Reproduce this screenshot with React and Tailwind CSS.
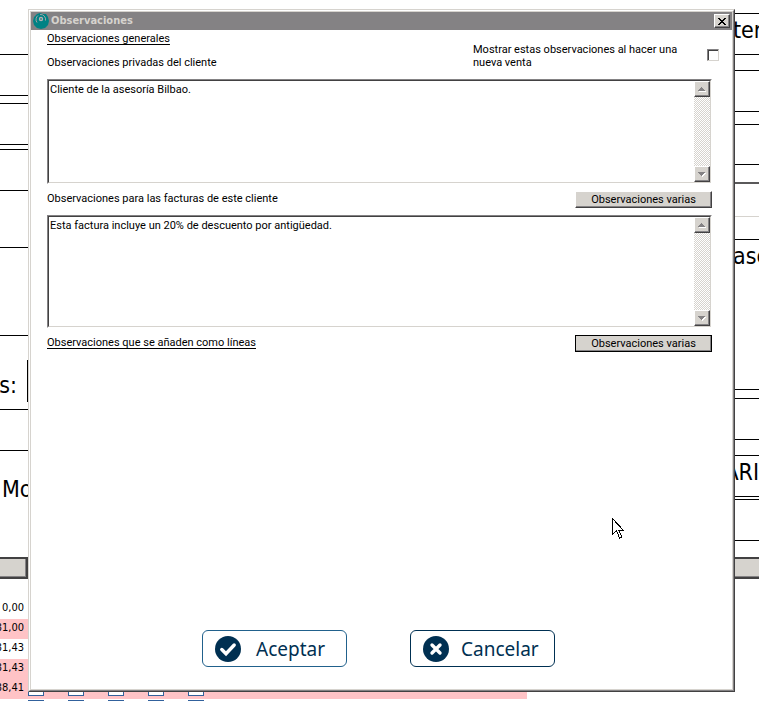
import { useState } from 'react'
import clsx from 'clsx'

const uiFont = 'font-[Roboto,"Liberation_Sans",sans-serif]'
const tahoma = 'font-["DejaVu_Sans_Condensed","DejaVu_Sans",sans-serif]'

const raised =
  'border border-t-white border-l-white border-r-[#424142] border-b-[#424142] bg-[#d6d3ce] shadow-[inset_-1px_-1px_0_#848284]'

const invoiceRows = [
  { id: 1, amount: '0,00' },
  { id: 2, amount: '31,00', marked: true },
  { id: 3, amount: '31,43' },
  { id: 4, amount: '31,43', marked: true },
  { id: 5, amount: '38,41', marked: true, selectable: true },
  { id: 6, amount: '', selectable: true },
]

const flags = ['Cobrada', 'Enviada', 'Impresa', 'Revisada', 'Cerrada']

const Cell = ({ className, children }) => (
  <div className={clsx('border-b border-black overflow-hidden', className)}>{children}</div>
)

const FormLeft = () => (
  <div className="w-7 text-[23px] leading-7 whitespace-nowrap overflow-hidden">
    <Cell className="h-[55px]" />
    <Cell className="h-[41px]" />
    <Cell className="h-2" />
    <Cell className="h-[41px]" />
    <Cell className="h-[5px]" />
    <Cell className="h-[41px]" />
    <Cell className="h-[57px]" />
    <Cell className="h-[88px]" />
    <Cell className="h-[74px] pt-6">
      <div className="flex h-[42px] items-center justify-end border-r border-black pr-2.5 pt-2">s:</div>
    </Cell>
    <Cell className="h-[41px]" />
    <div className="h-[106px] pt-6 pl-0.5">Mo</div>
    <div className="h-[22px] border-2 border-l-0 border-[#424142] bg-[#d6d3ce] shadow-[inset_-1px_-1px_0_#848284]" />
  </div>
)

const FormRight = () => (
  <div className="w-[26px] text-[23px] leading-7 whitespace-nowrap overflow-hidden">
    <Cell className="h-3.5" />
    <Cell className="h-[41px] pt-0.5">ter</Cell>
    <Cell className="h-4" />
    <Cell className="h-[41px]" />
    <Cell className="h-[13px]" />
    <Cell className="h-10" />
    <div className="h-[19px] border-b-2 border-[#5a595a]" />
    <div className="h-[33px] border-b border-[#d6d3ce]" />
    <Cell className="h-[23px]" />
    <Cell className="h-[150px] pt-0.5">ase</Cell>
    <Cell className="h-[9px]" />
    <Cell className="h-[41px]" />
    <Cell className="h-4" />
    <Cell className="flex h-[41px] justify-end pt-0.5">ARI</Cell>
    <Cell className="h-[3px]" />
    <Cell className="h-[41px]" />
    <div className="h-4" />
    <div className="h-[22px] border-y-2 border-[#424142] bg-[#d6d3ce] shadow-[inset_0_-1px_0_#848284]" />
  </div>
)

const InvoiceTable = () => (
  <table className="mt-5 w-[527px] table-fixed text-[11px] leading-4">
    <tbody>
      {invoiceRows.map((row) => (
        <tr key={row.id} className={clsx('h-5 align-top', row.marked && 'bg-[#ffc3c6]')}>
          <td className="w-7 p-0">
            <div className="flex justify-end overflow-hidden pr-1 pt-px">{row.amount}</div>
          </td>
          {flags.map((flag) => (
            <td key={flag} className="w-10 p-0 pt-px">
              {row.selectable && (
                <input
                  type="checkbox"
                  aria-label={flag}
                  className="block size-4 appearance-none border border-[#31619c] bg-white"
                />
              )}
            </td>
          ))}
          <td className="p-0" />
        </tr>
      ))}
    </tbody>
  </table>
)

const Logo = () => (
  <svg viewBox="0 0 16 16" className="size-4" aria-hidden="true">
    <path d="M4 1 7 0l3 1 3 0 2 3 1 4-1 4-3 3-4 1-4-1-3-3L0 8l1-4z" fill="#008284" />
    <path d="M4 9.500A5 5 0 0 1 5 2.500M7 1.500a5 5 0 0 1 5.500 6" fill="none" stroke="#a5a2a5" />
    <circle cx="8" cy="6" r="2.2" fill="#b5b2b5" />
    <circle cx="8" cy="6" r="1" fill="#4a8284" />
  </svg>
)

const ScrollButton = ({ label, down }) => (
  <button type="button" aria-label={label} className={clsx('flex size-4 items-center justify-center', raised)}>
    <svg viewBox="0 0 8 5" className="h-[5px] w-2" shapeRendering="crispEdges" aria-hidden="true">
      {down ? (
        <>
          <path d="M1 1h7v1H7v1H6v1H5v1H4V4H3V3H2V2H1z" fill="#fff" />
          <path d="M0 0h7v1H6v1H5v1H4v1H3V3H2V2H1V1H0z" fill="#848284" />
        </>
      ) : (
        <>
          <path d="M1 4h7v1H1z" fill="#fff" />
          <path d="M3 0h1v1h1v1h1v1h1v1H0V3h1V2h1V1h1z" fill="#848284" />
        </>
      )}
    </svg>
  </button>
)

const NotesBox = ({ label, defaultValue, className }) => (
  <div className="border border-t-[#848284] border-l-[#848284] border-r-white border-b-white">
    <div
      className={clsx(
        'flex border border-t-[#424142] border-l-[#424142] border-r-[#d6d3ce] border-b-[#d6d3ce]',
        className
      )}
    >
      <textarea
        aria-label={label}
        defaultValue={defaultValue}
        className="min-w-0 flex-1 resize-none overflow-hidden px-px py-0.5 leading-[13px] outline-none"
      />
      <div className="flex w-4 flex-col justify-between bg-[conic-gradient(#fff_25%,#d6d3ce_0_50%,#fff_0_75%,#d6d3ce_0)] bg-[length:2px_2px]">
        <ScrollButton label="Subir" />
        <ScrollButton label="Bajar" down />
      </div>
    </div>
  </div>
)

const PresetButton = ({ focused }) => (
  <button
    type="button"
    className={clsx('h-[17px] w-[137px] leading-[13px]', raised, focused && 'outline outline-black -outline-offset-1')}
  >
    Observaciones varias
  </button>
)

const CheckIcon = () => (
  <svg viewBox="0 0 26 26" className="size-[26px]" aria-hidden="true">
    <circle cx="13" cy="13" r="13" fill="#003052" />
    <path d="m6.800 13.500 4.200 4.200 8.200-8.700" fill="none" stroke="#fff" strokeWidth="3.4" strokeLinecap="round" />
  </svg>
)

const CrossIcon = () => (
  <svg viewBox="0 0 26 26" className="size-[26px]" aria-hidden="true">
    <circle cx="13" cy="13" r="13" fill="#003052" />
    <path d="m9 9 8 8m0-8-8 8" fill="none" stroke="#fff" strokeWidth="3.4" strokeLinecap="round" />
  </svg>
)

const ActionButton = ({ icon, children, className }) => (
  <button
    type="button"
    className={clsx(
      'flex h-[37px] w-[145px] items-center rounded-md border bg-white pl-3 font-["Noto_Sans",sans-serif] text-[19px] leading-6 text-[#003052]',
      className
    )}
  >
    {icon}
    {children}
  </button>
)

const Pointer = () => (
  <svg
    viewBox="0 0 12 21"
    className="absolute left-[612px] top-[518px] h-[21px] w-3"
    shapeRendering="crispEdges"
    aria-hidden="true"
  >
    <path d="M.5.5v16l4-4 3 7.500 2.500-1-3-6.500h4.500z" fill="#fff" stroke="#000" />
  </svg>
)

const NotesDialog = () => {
  const [showOnSale, setShowOnSale] = useState(false)

  return (
    <div
      role="dialog"
      aria-labelledby="dialog-title"
      className={clsx(
        'absolute inset-y-[9px] left-7 right-6 border border-t-[#d6d3ce] border-l-[#d6d3ce] border-r-[#424142] border-b-[#424142] text-[11px] text-black',
        uiFont
      )}
    >
      <div className="h-full border border-t-white border-l-white border-r-[#848284] border-b-[#848284]">
        <div className="flex h-full flex-col border border-[#d6d3ce] bg-white">
          <div className="flex h-[18px] shrink-0 items-center gap-0.5 bg-[#848284] px-0.5">
            <Logo />
            <h1 id="dialog-title" className={clsx('flex-1 font-bold leading-4 text-[#d6d3ce]', tahoma)}>
              Observaciones
            </h1>
            <button type="button" aria-label="Cerrar" className={clsx('flex h-3.5 w-4 items-center justify-center', raised)}>
              <svg viewBox="0 0 8 7" className="h-[7px] w-2" shapeRendering="crispEdges" aria-hidden="true">
                <path
                  d="M0 0h2v1h1v1h2V1h1V0h2v1H7v1H6v1H5v1h1v1h1v1h1v1H6V6H5V5H3v1H2v1H0V6h1V5h1V4h1V3H2V2H1V1H0z"
                  fill="#000"
                />
              </svg>
            </button>
          </div>

          <div className="flex justify-between pl-4 pr-[13px] leading-[13px]">
            <div className="pt-0.5">
              <h2 className="underline underline-offset-2">Observaciones generales</h2>
              <p className="mt-[11px]">Observaciones privadas del cliente</p>
            </div>
            <div className="flex items-end">
              <label htmlFor="show-on-sale" className="w-[234px] pr-6">
                Mostrar estas observaciones al hacer una nueva venta
              </label>
              <input
                id="show-on-sale"
                type="checkbox"
                checked={showOnSale}
                onChange={(e) => setShowOnSale(e.target.checked)}
                className="mb-2 size-3 appearance-none border border-t-[#848284] border-l-[#848284] border-r-[#d6d3ce] border-b-[#d6d3ce] bg-white shadow-[inset_1px_1px_0_#424142] checked:bg-black"
              />
            </div>
          </div>

          <div className="flex flex-col pl-4 pr-5 pt-2.5">
            <NotesBox
              label="Observaciones privadas del cliente"
              defaultValue="Cliente de la asesoría Bilbao."
              className="h-[103px]"
            />
            <div className="flex h-[31px] items-center justify-between">
              <p>Observaciones para las facturas de este cliente</p>
              <PresetButton />
            </div>
            <NotesBox
              label="Observaciones para las facturas de este cliente"
              defaultValue="Esta factura incluye un 20% de descuento por antigüedad."
              className="h-[111px]"
            />
            <div className="flex h-[31px] items-center justify-between">
              <h2 className="underline underline-offset-2">Observaciones que se añaden como líneas</h2>
              <PresetButton focused />
            </div>
          </div>

          <div className="mt-auto flex justify-center gap-[63px] pb-[22px] pr-1.5">
            <ActionButton icon={<CheckIcon />} className="gap-[15px] border-[#21618c]">
              Aceptar
            </ActionButton>
            <ActionButton icon={<CrossIcon />} className="gap-3 border-[#003052]">
              Cancelar
            </ActionButton>
          </div>
        </div>
      </div>
    </div>
  )
}

const App = () => (
  <div className={clsx('relative h-screen overflow-hidden bg-white text-black', tahoma)}>
    <div className="flex justify-between">
      <FormLeft />
      <FormRight />
    </div>
    <InvoiceTable />
    <NotesDialog />
    <Pointer />
  </div>
)

export default App
